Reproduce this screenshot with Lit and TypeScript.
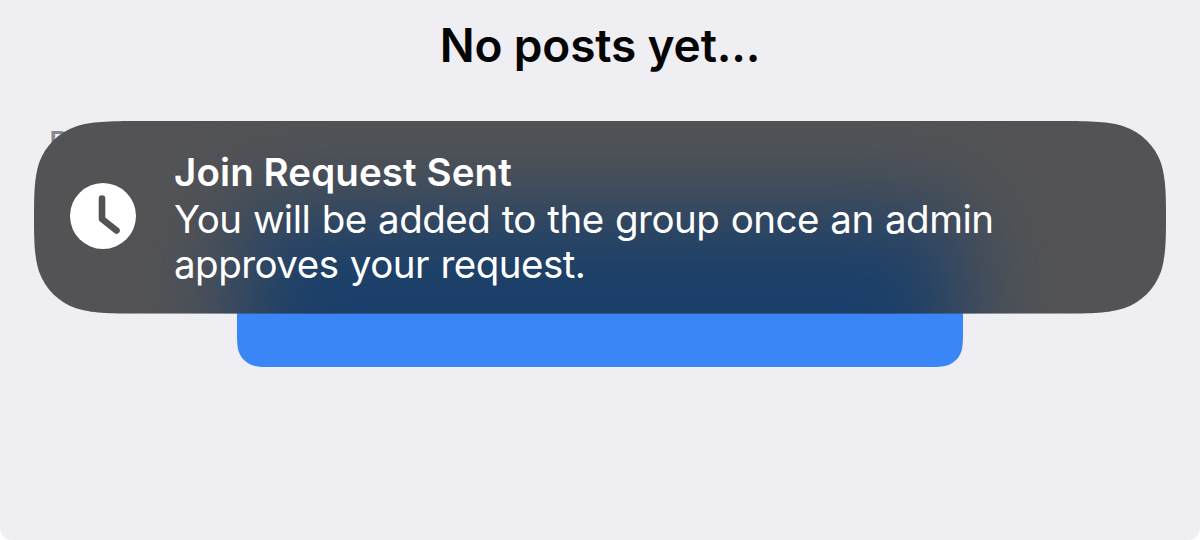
import {LitElement, html, css} from 'lit';
import {customElement, property} from 'lit/decorators.js';

@customElement('join-toast')
class JoinToast extends LitElement {
  @property() heading = '';
  @property() message = '';

  static styles = css`
    :host {
      display: block;
      width: 1132px;
      height: 193px;
    }

    .toast {
      position: relative;
      display: flex;
      align-items: center;
      box-sizing: border-box;
      width: 100%;
      height: 100%;
      padding-left: 36px;
      overflow: hidden;
      background-color: #535355;
      color: white;
      clip-path: path('M0 96.3 C0 72 0.4 57 5 42 C11.2 24.6 24.6 11.2 42 5.4 C57 0.6 74 0 106 0 H1026 C1058 0 1075 0.6 1090 5.4 C1107.4 11.2 1120.8 24.6 1127 42 C1131.6 57 1132 72 1132 96.3 C1132 120.5 1131.6 135.5 1127 150.5 C1120.8 167.9 1107.4 181.3 1090 187.2 C1075 192 1058 192.6 1026 192.6 H106 C74 192.6 57 192 42 187.2 C24.6 181.3 11.2 167.9 5 150.5 C0.4 135.5 0 120.5 0 96.3 Z');
    }

    /* the button shining through the material */
    .glow {
      position: absolute;
      left: 203px;
      top: 88px;
      width: 726px;
      height: 300px;
      border-radius: 40px;
      background-color: #1a3f6a;
      filter: blur(47px);
    }

    .icon {
      position: relative;
      flex: none;
      width: 66px;
      height: 66px;
      margin-top: -4px;
    }

    .text {
      position: relative;
      margin-left: 38px;
      margin-top: 0;
      font-size: 38.5px;
      line-height: 45px;
      white-space: nowrap;
    }

    .heading {
      font-weight: 600;
      line-height: 47px;
      letter-spacing: 0.1px;
    }

    .message {
      margin-top: 1px;
      letter-spacing: -0.52px;
      word-spacing: 1.1px;
      white-space: pre-line;
    }
  `;

  render() {
    return html`
      <div class="toast">
        <div class="glow"></div>
        <svg class="icon" viewBox="0 0 66 66">
          <circle cx="33" cy="33" r="33" fill="white"/>
          <path d="M32 15.5V36L46.5 47.5" fill="none" stroke="#535355" stroke-width="6.6"
                stroke-linecap="round" stroke-linejoin="round"/>
        </svg>
        <div class="text">
          <div class="heading">${this.heading}</div>
          <div class="message">${this.message}</div>
        </div>
      </div>
    `;
  }
}

@customElement('app-root')
class AppRoot extends LitElement {
  static styles = css`
    :host {
      display: block;
      height: 540px;
      background-color: white;
      font-family: Inter, 'Liberation Sans', sans-serif;
    }

    .page {
      position: relative;
      display: flex;
      flex-direction: column;
      box-sizing: border-box;
      height: 540px;
      padding-top: 17px;
      overflow: hidden;
      background-color: #efeef3;
      border-radius: 0 0 12px 12px;
    }

    .title {
      margin: 0;
      font-size: 46px;
      line-height: 56px;
      font-weight: 600;
      letter-spacing: -0.15px;
      text-align: center;
      color: #050505;
    }

    .label {
      margin: 53px 0 0 49px;
      font-size: 31px;
      line-height: 34px;
      font-weight: 500;
      color: #8a8a8e;
    }

    .button {
      align-self: center;
      width: 726px;
      height: 152px;
      margin-top: 55px;
      background-color: #3b86f7;
      clip-path: path('M0 0 H726 V115.5 C726 126 726 131 724.2 136.8 C722 143 717 148 710.8 150.2 C705 152 700 152 689.5 152 H36.5 C26 152 21 152 15.2 150.2 C9 148 4 143 1.8 136.8 C0 131 0 126 0 115.5 Z');
    }

    .overlay {
      position: absolute;
      left: 34px;
      top: 121px;
    }
  `;

  render() {
    return html`
      <div class="page">
        <h1 class="title">No posts yet...</h1>
        <div class="label">P</div>
        <div class="button"></div>
        <join-toast class="overlay"
                    heading="Join Request Sent"
                    .message=${'You will be added to the group once an admin\napproves your request.'}></join-toast>
      </div>
    `;
  }
}
